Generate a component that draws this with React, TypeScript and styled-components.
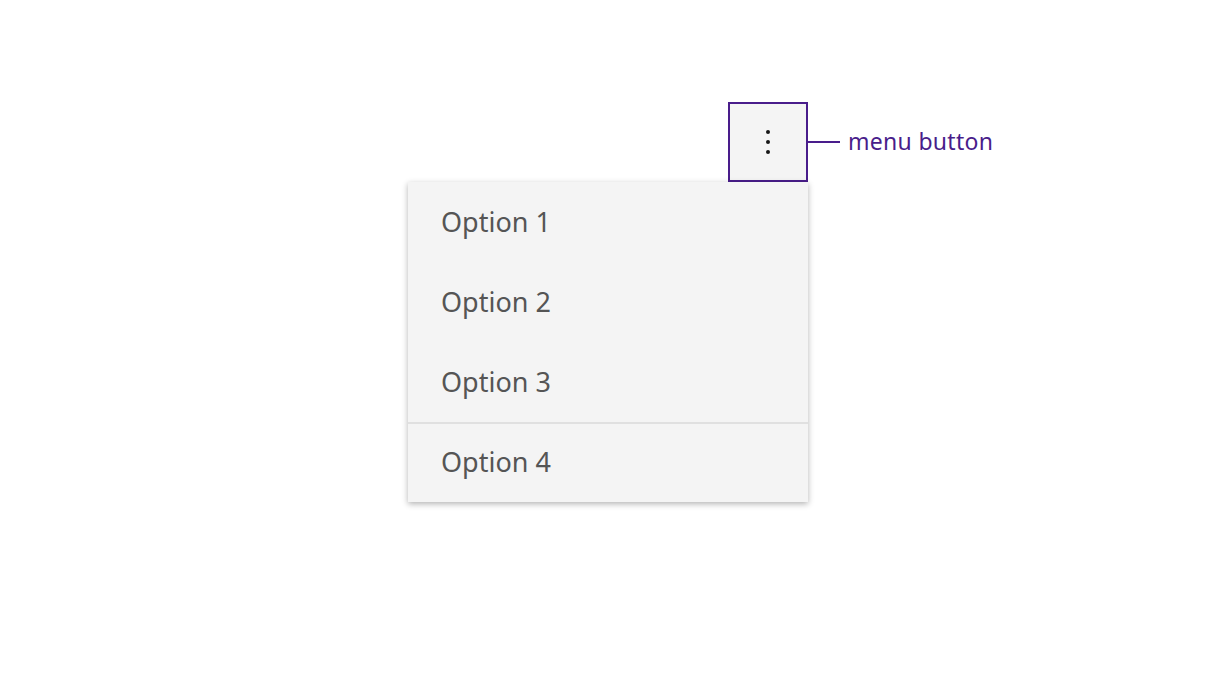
import React from "react";
import styled, { createGlobalStyle } from "styled-components";

const Global = createGlobalStyle`
  html, body { margin: 0; padding: 0; background: #ffffff; }
  body { font-family: "Noto Sans", "Liberation Sans", sans-serif; }
`;

const Page = styled.div`
  width: 1216px;
  height: 684px;
  display: grid;
  grid-template-columns: 408px 400px 1fr;
  grid-template-rows: 80px auto;
  align-content: start;
  padding-top: 102px;
  box-sizing: border-box;
`;

const ButtonCell = styled.div`
  grid-column: 2;
  grid-row: 1;
  display: flex;
  justify-content: flex-end;
`;

const MenuButton = styled.button`
  width: 80px;
  height: 80px;
  box-sizing: border-box;
  border: 2px solid #491d8b;
  background: #f4f4f4;
  padding: 0;
  display: flex;
  align-items: center;
  justify-content: center;
  cursor: pointer;
`;

const Annotation = styled.div`
  grid-column: 3;
  grid-row: 1;
  display: flex;
  align-items: center;
  gap: 8px;
`;

const Leader = styled.span`
  width: 32px;
  height: 2px;
  background: #491d8b;
`;

const Label = styled.span`
  color: #491d8b;
  font-size: 23px;
  letter-spacing: 0.3px;
  margin-top: -2px;
`;

const Menu = styled.ul`
  grid-column: 2;
  grid-row: 2;
  list-style: none;
  margin: 0;
  padding: 0;
  background: #f4f4f4;
  box-shadow: 0 2px 6px rgba(0, 0, 0, 0.3);
`;

const Item = styled.li<{ $divider?: boolean }>`
  height: 80px;
  box-sizing: border-box;
  display: flex;
  align-items: center;
  padding-left: 33px;
  padding-bottom: ${(p) => (p.$divider ? "4px" : "2px")};
  color: #555555;
  font-size: 27px;
  border-top: ${(p) => (p.$divider ? "2px solid #e0e0e0" : "none")};
`;

const Kebab = () => (
  <svg width="8" height="28" viewBox="0 0 8 28">
    <circle cx="4" cy="4" r="2" fill="#161616" />
    <circle cx="4" cy="14" r="2" fill="#161616" />
    <circle cx="4" cy="24" r="2" fill="#161616" />
  </svg>
);

export default function App() {
  return (
    <>
      <Global />
      <Page>
        <ButtonCell>
          <MenuButton aria-label="menu">
            <Kebab />
          </MenuButton>
        </ButtonCell>
        <Annotation>
          <Leader />
          <Label>menu button</Label>
        </Annotation>
        <Menu>
          <Item>Option 1</Item>
          <Item>Option 2</Item>
          <Item>Option 3</Item>
          <Item $divider>Option 4</Item>
        </Menu>
      </Page>
    </>
  );
}
